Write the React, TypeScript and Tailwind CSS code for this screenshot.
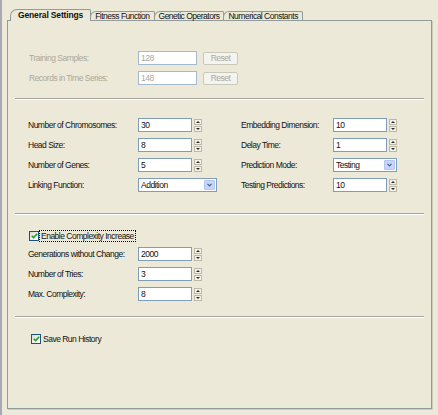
import React from 'react'

const tabs = ['General Settings', 'Fitness Function', 'Genetic Operators', 'Numerical Constants']

function SpinBtn({ up }: { up?: boolean }) {
  return (
    <div className="flex h-[6px] w-[8px] items-center justify-center border border-[#bdb9aa] bg-[#f4f2e8]">
      <svg width="4" height="2" viewBox="0 0 4 2">
        <path d={up ? 'M0 2L2 0L4 2Z' : 'M0 0L2 2L4 0Z'} fill="#2b2b2b" />
      </svg>
    </div>
  )
}

function Spin() {
  return (
    <div className="ml-[2px] flex flex-col gap-[1px]">
      <SpinBtn up />
      <SpinBtn />
    </div>
  )
}

function NumField({ value }: { value: string }) {
  return (
    <div className="flex items-center">
      <div className="flex h-[14px] w-[54px] items-center border border-[#7f9db9] bg-white px-[2px]">{value}</div>
      <Spin />
    </div>
  )
}

function Combo({ value, w }: { value: string; w: string }) {
  return (
    <div className={`flex h-[14px] items-center border border-[#7f9db9] bg-white ${w}`}>
      <span className="flex-1 px-[2px]">{value}</span>
      <div className="mr-[1px] flex h-[10px] w-[11px] items-center justify-center rounded-[1px] border border-[#b3c7f2] bg-[#c6d5fa]">
        <svg width="5" height="4" viewBox="0 0 5 4">
          <path d="M0.5 0.8L2.5 2.8L4.5 0.8" stroke="#4d6185" strokeWidth="1.2" fill="none" />
        </svg>
      </div>
    </div>
  )
}

function Check() {
  return (
    <div className="flex h-[10px] w-[10px] items-center justify-center border border-[#1c5180] bg-gradient-to-br from-[#dcdcd5] to-white">
      <svg width="7" height="6" viewBox="0 0 7 6">
        <path d="M0.8 2.8L2.6 4.6L6.2 0.8" stroke="#21a121" strokeWidth="1.6" fill="none" />
      </svg>
    </div>
  )
}

function Separator() {
  return <div className="h-0 border-t border-b border-t-[#a6a5a0] border-b-white" />
}

function Row({ label, children, lw = 'w-[110px]' }: { label: string; children: React.ReactNode; lw?: string }) {
  return (
    <div className="flex h-[14px] items-center">
      <span className={lw}>{label}</span>
      {children}
    </div>
  )
}

export default function App() {
  return (
    <div className="flex h-[415px] w-[438px] flex-col border-l-2 border-[#a9a8b4] bg-[#ece9d8] pt-[9px] pr-[6px] pb-[6px] pl-[5px] font-['Liberation_Sans',Arial,sans-serif] text-[8.5px] leading-none tracking-[-0.5px] text-[#111]">
      {/* tab strip */}
      <div className="relative z-10 -mb-px flex items-end pl-[3px]">
        {tabs.map((t, i) =>
          i === 0 ? (
            <div
              key={t}
              className="flex h-[12px] items-center rounded-tl-[7px] rounded-tr-[2px] border border-b-0 border-[#919b9c] bg-[#ece9d8] px-[7px] pb-px font-bold tracking-[-0.15px]"
            >
              {t}
            </div>
          ) : (
            <div
              key={t}
              className="mb-px -ml-px flex h-[9px] items-center rounded-tl-[6px] rounded-tr-[2px] border border-b-0 border-[#919b9c] bg-[#ece9d8] px-[4px]"
            >
              {t}
            </div>
          )
        )}
      </div>

      <div className="flex flex-1 flex-col border border-[#919b9c] bg-[#ece9d8] px-[7px] shadow-[1px_1px_0_#d0cdbe]">
        {/* training data */}
        <div className="flex flex-col gap-[6px] pt-[30px] pl-[14px] text-[#aca899]">
          {[
            ['Training Samples:', '128'],
            ['Records in Time Series:', '148'],
          ].map(([l, v]) => (
            <Row key={l} label={l} lw="w-[109px]">
              <div className="flex h-[14px] w-[59px] items-center border border-[#a5b9ce] bg-white px-[2px]">{v}</div>
              <div className="ml-[6px] flex h-[13px] w-[35px] items-center justify-center rounded-[2px] border border-[#cac8bb] bg-[#f4f3ee]">
                Reset
              </div>
            </Row>
          ))}
        </div>
        <div className="mt-[13px]">
          <Separator />
        </div>

        {/* main settings */}
        <div className="mt-[18px] flex pl-[13px]">
          <div className="flex w-[213px] flex-col gap-[6px]">
            <Row label="Number of Chromosomes:">
              <NumField value="30" />
            </Row>
            <Row label="Head Size:">
              <NumField value="8" />
            </Row>
            <Row label="Number of Genes:">
              <NumField value="5" />
            </Row>
            <Row label="Linking Function:">
              <Combo value="Addition" w="w-[79px]" />
            </Row>
          </div>
          <div className="flex flex-col gap-[6px]">
            <Row label="Embedding Dimension:" lw="w-[92px]">
              <NumField value="10" />
            </Row>
            <Row label="Delay Time:" lw="w-[92px]">
              <NumField value="1" />
            </Row>
            <Row label="Prediction Mode:" lw="w-[92px]">
              <Combo value="Testing" w="w-[64px]" />
            </Row>
            <Row label="Testing Predictions:" lw="w-[92px]">
              <NumField value="10" />
            </Row>
          </div>
        </div>
        <div className="mt-[21px]">
          <Separator />
        </div>

        {/* complexity */}
        <div className="mt-[15px] flex flex-col pl-[13px]">
          <div className="flex h-[12px] items-center pl-px">
            <Check />
            <span className="flex h-[12px] items-center border border-dotted border-black px-px">Enable Complexity Increase</span>
          </div>
          <div className="mt-[5px] flex flex-col gap-[6px]">
            <Row label="Generations without Change:">
              <NumField value="2000" />
            </Row>
            <Row label="Number of Tries:">
              <NumField value="3" />
            </Row>
            <Row label="Max. Complexity:">
              <NumField value="8" />
            </Row>
          </div>
        </div>
        <div className="mt-[15px]">
          <Separator />
        </div>

        <div className="mt-[15px] flex h-[12px] items-center gap-[2px] pl-[16px]">
          <Check />
          <span>Save Run History</span>
        </div>
      </div>
    </div>
  )
}
